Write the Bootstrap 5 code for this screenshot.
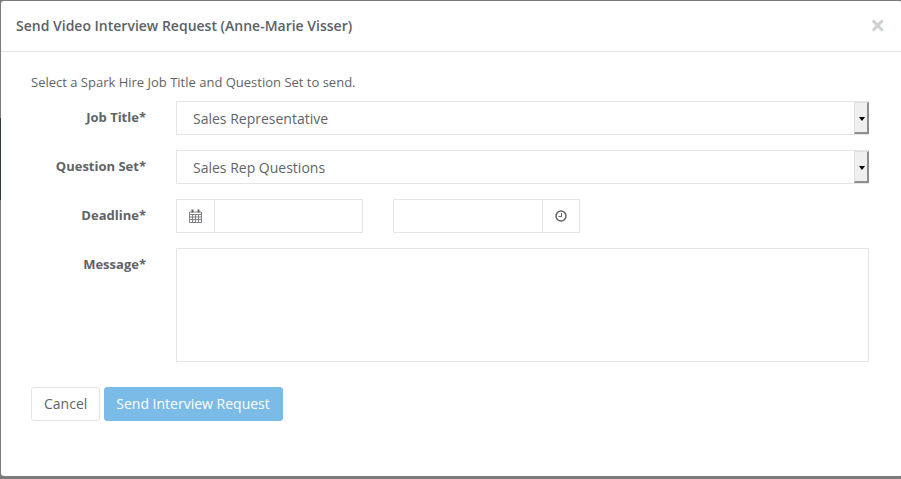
<!DOCTYPE html>
<html lang="en">
<head>
    <meta charset="UTF-8">
    <meta name="viewport" content="width=device-width, initial-scale=1.0">
    <title>Send Video Interview Request</title>
    <link href="https://cdn.jsdelivr.net/npm/bootstrap@5.3.0/dist/css/bootstrap.min.css" rel="stylesheet">
    <style>
        html, body {
            height: 100%;
        }
        body {
            background: linear-gradient(#7b7b7b 118px, #2f3a3c 118px, #2f3a3c 200px, #7b7b7b 200px);
            font-family: "Open Sans", sans-serif;
            font-size: 13px;
            color: #5f6468;
            overflow: hidden;
        }
        .req-shell {
            height: 475px;
            margin: 1px 2px 0 1px;
            background: #fff;
            border: 0;
            border-radius: 3px;
            color: #5f6468;
        }
        .req-head {
            height: 51px;
            padding: 0 15px;
            border-bottom: 1px solid #e5e5e5;
        }
        .req-title {
            font-size: 14px;
            font-weight: 600;
            margin: 0;
            color: #5c6166;
        }
        .req-close {
            font-size: 26px;
            font-weight: 700;
            color: #cfcfcf;
            line-height: 1;
            background: none;
            border: 0;
            padding: 0;
            margin: 0 2px 2px 0;
        }
        .req-body {
            padding: 21px 33px 0 30px;
        }
        .req-intro {
            height: 18px;
            line-height: 18px;
            margin: 0 0 10px;
        }
        .req-rows {
            gap: 15px;
        }
        .req-label {
            width: 115px;
            flex: none;
            text-align: right;
            font-weight: 700;
            line-height: 32px;
            margin: 0 30px 0 0;
        }
        .req-field {
            height: 34px;
            border: 1px solid #e5e5e5;
            border-radius: 0;
            box-shadow: none;
            font-size: 14px;
            color: #5f6468;
            padding: 0 16px;
        }
        .req-sel {
            appearance: none;
            background-image: none;
            line-height: 34px;
        }
        .req-arrow {
            position: absolute;
            top: 1px;
            right: 0;
            width: 15px;
            height: 32px;
            background: #efefef;
            border-style: solid;
            border-width: 1px 2px 2px 1px;
            border-color: #e0e0e0 #8e8e8e #8e8e8e #e0e0e0;
        }
        .req-arrow::after {
            content: "";
            position: absolute;
            left: 4px;
            top: 14px;
            border-style: solid;
            border-width: 4px 3px 0;
            border-color: #000 transparent transparent;
        }
        .req-time {
            width: 187px;
            height: 34px;
        }
        .req-time .form-control {
            border-radius: 0;
        }
        .req-time .req-open-end {
            border-right: 0;
        }
        .req-addon {
            width: 38px;
            height: 34px;
            flex: none;
            border: 1px solid #e5e5e5;
            background: #fff;
            color: #5f6468;
        }
        .req-left {
            border-right: 0;
        }
        .req-gap {
            gap: 30px;
        }
        .req-msg {
            height: 114px;
            resize: none;
        }
        .req-actions {
            margin-top: 25px;
            gap: 4px;
        }
        .req-btn {
            height: 34px;
            font-size: 14px;
            border-radius: 3px;
            padding: 0 12px;
            line-height: 32px;
        }
        .req-cancel {
            border: 1px solid #e5e5e5;
            background: #fff;
            color: #5f6468;
        }
        .req-send {
            border: 1px solid #7abbe8;
            background: #7abbe8;
            color: #fff;
            font-weight: 400;
            padding: 0 12px 0 11px;
        }
    </style>
</head>
<body>

    <div class="modal-content req-shell d-block">
        <div class="req-head d-flex align-items-center justify-content-between">
            <h5 class="req-title">Send Video Interview Request (Anne-Marie Visser)</h5>
            <button type="button" class="req-close" aria-label="Close">×</button>
        </div>

        <div class="req-body">
            <p class="req-intro">Select a Spark Hire Job Title and Question Set to send.</p>

            <form class="d-flex flex-column req-rows">
                <div class="d-flex">
                    <label class="req-label">Job Title*</label>
                    <div class="flex-grow-1 position-relative">
                        <select class="form-select req-field req-sel"><option>Sales Representative</option></select>
                        <span class="req-arrow"></span>
                    </div>
                </div>

                <div class="d-flex">
                    <label class="req-label">Question Set*</label>
                    <div class="flex-grow-1 position-relative">
                        <select class="form-select req-field req-sel"><option>Sales Rep Questions</option></select>
                        <span class="req-arrow"></span>
                    </div>
                </div>

                <div class="d-flex">
                    <label class="req-label">Deadline*</label>
                    <div class="d-flex req-gap">
                        <div class="d-flex req-time">
                            <span class="req-addon req-left d-flex align-items-center justify-content-center">
                                <svg width="13" height="14" viewBox="0 0 13 14" fill="none" stroke="#808488" stroke-width="1">
                                    <path d="M.5 3h12v10.500H.5zM.5 5.500h12M.5 8h12M.5 10.500h12M3.500 5.500v8M6.500 5.500v8M9.500 5.500v8"/>
                                    <path d="M3.500 .5v3M9.500 .5v3" stroke="#5f6468" stroke-width="2"/>
                                </svg>
                            </span>
                            <input class="form-control req-field" type="text">
                        </div>
                        <div class="d-flex req-time">
                            <input class="form-control req-field req-open-end" type="text">
                            <span class="req-addon d-flex align-items-center justify-content-center">
                                <svg width="12" height="12" viewBox="0 0 12 12" fill="none" stroke="#5f6468">
                                    <circle cx="6" cy="6" r="5" stroke-width="1.500"/>
                                    <path d="M6.500 3v3.500H3.500" stroke-width="1"/>
                                </svg>
                            </span>
                        </div>
                    </div>
                </div>

                <div class="d-flex">
                    <label class="req-label">Message*</label>
                    <textarea class="form-control req-field req-msg flex-grow-1"></textarea>
                </div>
            </form>

            <div class="d-flex req-actions">
                <button type="button" class="btn req-btn req-cancel">Cancel</button>
                <button type="button" class="btn req-btn req-send">Send Interview Request</button>
            </div>
        </div>
    </div>

</body>
</html>
